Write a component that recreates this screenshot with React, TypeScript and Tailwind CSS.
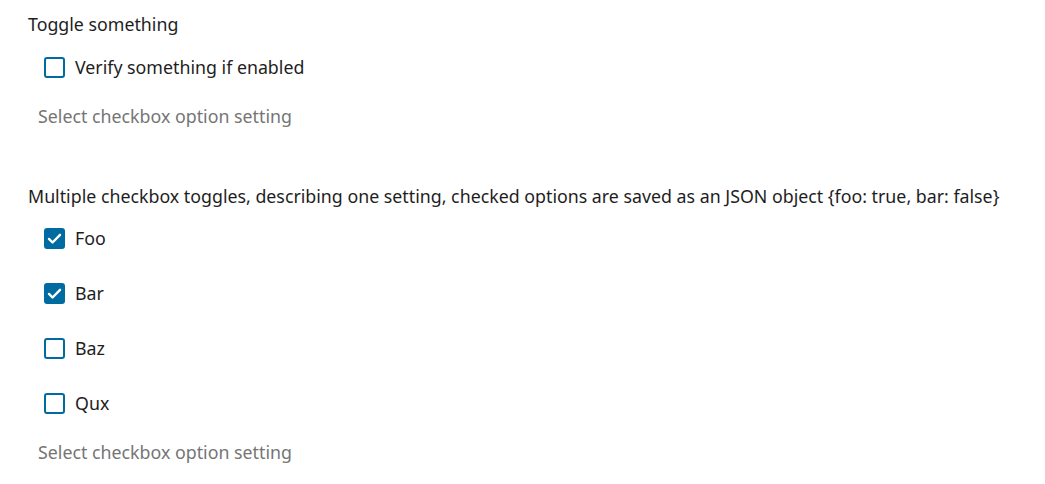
import { useState } from "react";

function Box({ checked, onClick }: { checked: boolean; onClick: () => void }) {
    return (
        <button
            type="button"
            onClick={onClick}
            className={
                "flex h-[21px] w-[21px] shrink-0 items-center justify-center rounded-[3px] border-2 border-[#006ba1] " +
                (checked ? "bg-[#006ba1]" : "bg-white")
            }
        >
            {checked && (
                <svg viewBox="0 0 20 20" className="h-[19px] w-[19px]" fill="none">
                    <path d="M3.5 10.5l4.2 4.2 8.8-9" stroke="white" strokeWidth="2.8" strokeLinecap="round" strokeLinejoin="round" />
                </svg>
            )}
        </button>
    );
}

function Option({ label, checked, onToggle }: { label: string; checked: boolean; onToggle: () => void }) {
    return (
        <label className="flex h-[22px] items-center gap-[10px] pl-[16px] text-[17.8px] text-[#1e1e1e]">
            <Box checked={checked} onClick={onToggle} />
            <span>{label}</span>
        </label>
    );
}

export default function App() {
    const [verify, setVerify] = useState(false);
    const [opts, setOpts] = useState<Record<string, boolean>>({ foo: true, bar: true, baz: false, qux: false });

    const toggle = (k: string) => setOpts((o) => ({ ...o, [k]: !o[k] }));

    return (
        <div className="min-h-screen bg-white px-[28px] pt-[13px] font-['Noto_Sans',sans-serif]">
            {/* Single toggle */}
            <section>
                <p className="text-[17.8px] leading-[22px] text-[#1e1e1e]">Toggle something</p>
                <div className="mt-[21px]">
                    <Option label="Verify something if enabled" checked={verify} onToggle={() => setVerify(!verify)} />
                </div>
                <p className="mt-[27px] pl-[10px] text-[17.8px] leading-[22px] text-[#757575]">Select checkbox option setting</p>
            </section>

            {/* Multiple toggles */}
            <section className="mt-[58px]">
                <p className="text-[17.8px] leading-[22px] text-[#1e1e1e]">
                    Multiple checkbox toggles, describing one setting, checked options are saved as an JSON object {"{foo: true, bar: false}"}
                </p>
                <div className="mt-[20px] flex flex-col gap-[33px]">
                    <Option label="Foo" checked={opts.foo} onToggle={() => toggle("foo")} />
                    <Option label="Bar" checked={opts.bar} onToggle={() => toggle("bar")} />
                    <Option label="Baz" checked={opts.baz} onToggle={() => toggle("baz")} />
                    <Option label="Qux" checked={opts.qux} onToggle={() => toggle("qux")} />
                </div>
                <p className="mt-[27px] pl-[10px] text-[17.8px] leading-[22px] text-[#757575]">Select checkbox option setting</p>
            </section>
        </div>
    );
}
